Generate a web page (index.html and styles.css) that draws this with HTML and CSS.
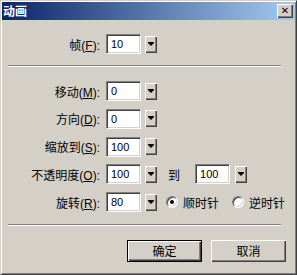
FILE: index.html
```html
<!DOCTYPE html>
<html lang="zh-CN">
<head>
    <meta charset="UTF-8">
    <title>动画</title>
    <link rel="stylesheet" href="styles.css">
</head>
<body>
    <div class="window">
        <div class="titlebar">
            <span class="title">动画</span>
            <span class="close">&#x2715;</span>
        </div>

        <div class="content">
            <div class="row">
                <label class="label">帧(<u>F</u>):</label>
                <div class="field">10</div>
                <span class="drop"></span>
            </div>

            <div class="sep sep-top"></div>

            <div class="rows">
                <div class="row">
                    <label class="label">移动(<u>M</u>):</label>
                    <div class="field">0</div>
                    <span class="drop"></span>
                </div>
                <div class="row">
                    <label class="label">方向(<u>D</u>):</label>
                    <div class="field">0</div>
                    <span class="drop"></span>
                </div>
                <div class="row">
                    <label class="label">缩放到(<u>S</u>):</label>
                    <div class="field">100</div>
                    <span class="drop"></span>
                </div>
                <div class="row">
                    <label class="label">不透明度(<u>O</u>):</label>
                    <div class="field">100</div>
                    <span class="drop"></span>
                    <span class="to">到</span>
                    <div class="field">100</div>
                    <span class="drop drop-far"></span>
                </div>
                <div class="row">
                    <label class="label">旋转(<u>R</u>):</label>
                    <div class="field">80</div>
                    <span class="drop"></span>
                    <span class="radio checked"></span>
                    <span class="radio-text">顺时针</span>
                    <span class="radio"></span>
                    <span class="radio-text">逆时针</span>
                </div>
            </div>

            <div class="sep sep-bottom"></div>

            <div class="buttons">
                <div class="btn default">确定</div>
                <div class="btn">取消</div>
            </div>
        </div>
    </div>
</body>
</html>
```

FILE: styles.css
```css
body {
    margin: 0;
    background: #d4d0c8;
    font-family: Tahoma, "Liberation Sans", "Noto Sans CJK SC", sans-serif;
    font-size: 12px;
    color: #000;
}

.window {
    width: 297px;
    height: 275px;
    box-sizing: border-box;
    padding: 1px;
    background: #d4d0c8;
    border-top: 1px solid #d4d0c8;
    border-left: 1px solid #d4d0c8;
    border-right: 1px solid #404040;
    border-bottom: 1px solid #404040;
    box-shadow: inset 1px 1px 0 #fff, inset -1px -1px 0 #808080;
}

.titlebar {
    height: 18px;
    display: flex;
    align-items: center;
    justify-content: space-between;
    background: linear-gradient(to right, #0a246a, #a6caf0);
}

.title {
    color: #fff;
    font-weight: bold;
    font-family: "Noto Sans CJK SC", sans-serif;
    font-size: 12px;
    padding-left: 1px;
    line-height: 18px;
}

.close {
    width: 16px;
    height: 14px;
    margin-right: 2px;
    box-sizing: border-box;
    background: #d4d0c8;
    box-shadow: inset 1px 1px 0 #fff, inset -1px -1px 0 #404040, inset -2px -2px 0 #808080;
    font-size: 10px;
    font-weight: bold;
    line-height: 14px;
    text-align: center;
    font-family: "DejaVu Sans", sans-serif;
}

.content {
    padding-top: 14px;
}

.rows {
    display: flex;
    flex-direction: column;
    gap: 7.75px;
}

.row {
    display: flex;
    align-items: center;
    height: 20px;
}

.label {
    width: 98px;
    text-align: right;
    white-space: nowrap;
    margin-right: 6px;
}

u {
    text-decoration: underline;
}

.field {
    width: 35px;
    height: 20px;
    box-sizing: border-box;
    background: #fff;
    border-top: 1px solid #808080;
    border-left: 1px solid #808080;
    border-right: 1px solid #fff;
    border-bottom: 1px solid #fff;
    box-shadow: inset 1px 1px 0 #404040, inset -1px -1px 0 #d4d0c8;
    font-family: Tahoma, "Liberation Sans", sans-serif;
    font-size: 11px;
    line-height: 18px;
    padding-left: 4px;
}

.drop {
    width: 12px;
    height: 17px;
    margin-left: 4px;
    box-sizing: border-box;
    position: relative;
    background: #d4d0c8;
    box-shadow: inset 1px 1px 0 #fff, inset -1px -1px 0 #404040, inset -2px -2px 0 #808080;
}

.drop::after {
    content: "";
    position: absolute;
    left: 3px;
    top: 7px;
    border-left: 3px solid transparent;
    border-right: 3px solid transparent;
    border-top: 3px solid #000;
}

.drop::before {
    content: "";
    position: absolute;
    left: 3px;
    top: 6px;
    width: 6px;
    height: 1px;
    background: #000;
}

.drop-far {
    margin-left: 5px;
}

.to {
    font-family: "Noto Sans CJK SC", sans-serif;
    margin-left: 11px;
    margin-right: 15px;
}

.radio {
    width: 12px;
    height: 12px;
    box-sizing: border-box;
    border-radius: 50%;
    background: #fff;
    border-top: 1px solid #808080;
    border-left: 1px solid #808080;
    border-right: 1px solid #fff;
    border-bottom: 1px solid #fff;
    box-shadow: inset 1px 1px 0 #404040, inset -1px -1px 0 #d4d0c8;
    margin-left: 9px;
    position: relative;
}

.radio.checked::after {
    content: "";
    position: absolute;
    left: 3px;
    top: 3px;
    width: 4px;
    height: 4px;
    border-radius: 50%;
    background: #000;
}

.radio + .radio-text {
    margin-left: 5px;
}

.radio-text {
    font-family: "Noto Sans CJK SC", sans-serif;
    margin-right: 4px;
}

.sep {
    margin-left: 6px;
    width: 273px;
    height: 1px;
    background: #808080;
    border-bottom: 1px solid #fff;
}

.sep-top {
    margin-top: 11px;
    margin-bottom: 14px;
}

.sep-bottom {
    margin-top: 12px;
}

.buttons {
    display: flex;
    justify-content: flex-end;
    gap: 9px;
    padding-right: 9px;
    margin-top: 14px;
}

.btn {
    width: 75px;
    height: 22px;
    box-sizing: border-box;
    background: #d4d0c8;
    box-shadow: inset 1px 1px 0 #fff, inset -1px -1px 0 #404040, inset -2px -2px 0 #808080;
    font-family: "Noto Sans CJK SC", sans-serif;
    line-height: 22px;
    text-align: center;
}

.btn.default {
    border: 1px solid #000;
    line-height: 20px;
}
```
